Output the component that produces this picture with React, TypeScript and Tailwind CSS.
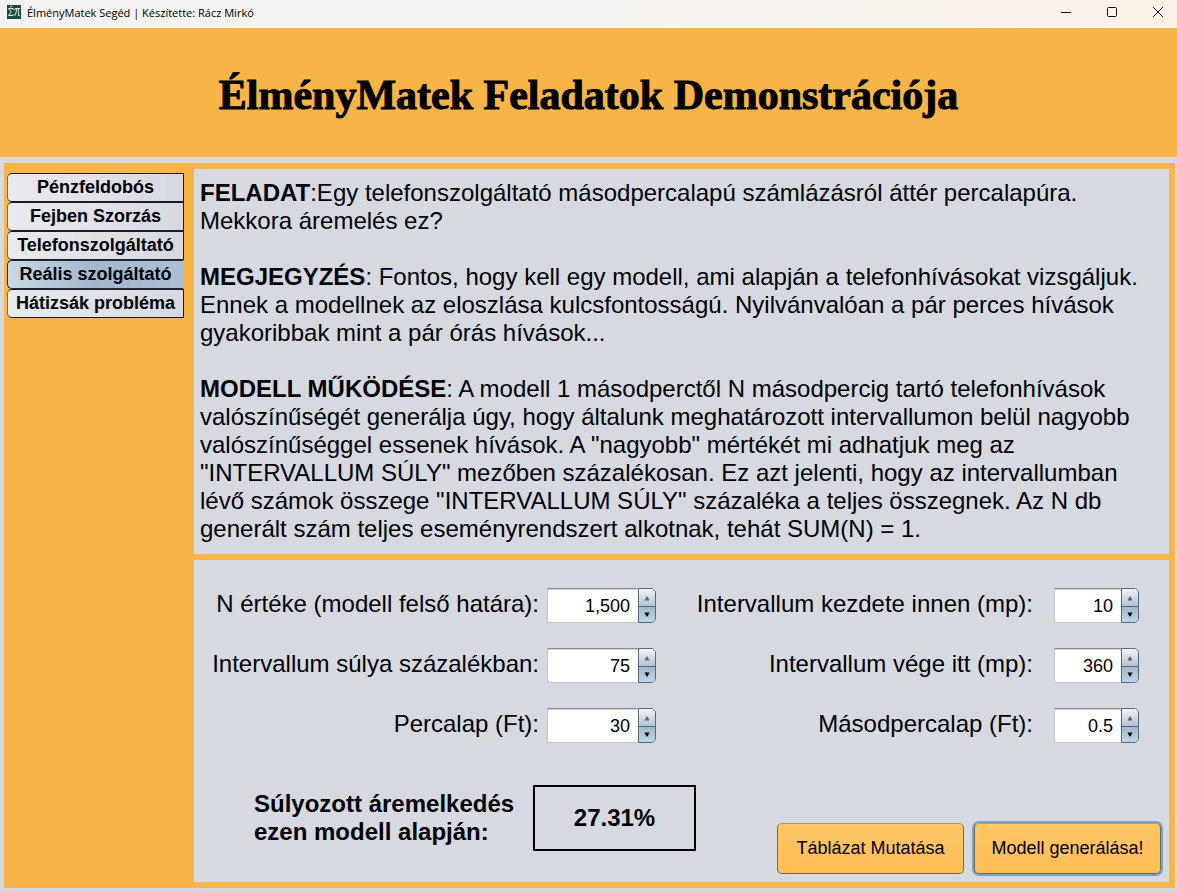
import { useState } from "react";

const tabs = ["Pénzfeldobós", "Fejben Szorzás", "Telefonszolgáltató", "Reális szolgáltató", "Hátizsák probléma"];

const fields = [
  { id: "n", label: "N értéke (modell felső határa):", value: "1,500", right: false },
  { id: "start", label: "Intervallum kezdete innen (mp):", value: "10", right: true },
  { id: "weight", label: "Intervallum súlya százalékban:", value: "75", right: false },
  { id: "end", label: "Intervallum vége itt (mp):", value: "360", right: true },
  { id: "minute", label: "Percalap (Ft):", value: "30", right: false },
  { id: "second", label: "Másodpercalap (Ft):", value: "0.5", right: true },
];

function Spinner({ id, initial }: { id: string; initial: string }) {
  const [value, setValue] = useState(initial);
  const step = (direction: number) => {
    const current = Number(value.replace(/,/g, ""));
    const size = initial.includes(".") ? 0.1 : 1;
    setValue((Math.round((current + direction * size) * 10) / 10).toLocaleString("en-US"));
  };
  return (
    <div className="flex h-[35px]">
      <input
        id={id}
        type="text"
        value={value}
        onChange={(e) => setValue(e.target.value)}
        className="w-full min-w-0 flex-1 border border-r-0 border-[#c4c6cb] border-t-[#8b8d92] bg-white pr-2 text-right text-[18px] leading-6 text-black shadow-[inset_0_1px_0_#d0d1d4] outline-none"
      />
      <div className="flex w-[18px] flex-col overflow-hidden rounded-r-[5px] border border-[#4f6a85]">
        <button type="button" aria-label="Növelés" onClick={() => step(1)} className="flex flex-1 items-center justify-center border-b border-[#4f6a85] bg-linear-to-b from-[#f2f5f8] to-[#b4c2cf] pt-[2px]">
          <svg width="6" height="5" viewBox="0 0 6 5"><path d="M2.5 0.5 H3.5 L5.5 4.5 H0.5 Z" fill="#62686e" /></svg>
        </button>
        <button type="button" aria-label="Csökkentés" onClick={() => step(-1)} className="flex flex-1 items-center justify-center bg-linear-to-b from-[#a3b8cd] to-[#bdd3e7]">
          <svg width="6" height="5" viewBox="0 0 6 5"><path d="M0.5 0.5 H5.5 L3.5 4.5 H2.5 Z" fill="#000" /></svg>
        </button>
      </div>
    </div>
  );
}

export default function App() {
  const [active, setActive] = useState(3);
  return (
    <div className="flex min-h-screen flex-col bg-[#d6d9e0] font-['Liberation_Sans',Arial,sans-serif] text-black">
      <header className="flex h-7 items-center bg-linear-to-r from-[#f2f2f2] via-[#f5f3f1] to-[#faf1e8] pr-[13px] pb-1 pl-[7px] font-['Open_Sans','Noto_Sans',sans-serif] text-[11px]">
        <svg width="14" height="14" viewBox="0 0 14 14" className="mr-[6px]" aria-hidden="true">
          <rect width="14" height="14" fill="#164f3d" />
          <path d="M6 5V3.5H1.5L4.2 7L1.5 10.5H6V9M3.2 2.2L5 1" fill="none" stroke="#e6eeea" strokeWidth="1" />
          <path d="M7 5Q7.5 3.5 9 3.5H13.2M9.5 3.5Q9.5 8 7.8 10.8M11.5 3.5Q11 8 11.5 10.5H12.8" fill="none" stroke="#e6eeea" strokeWidth="1" />
        </svg>
        <span className="flex-1 pt-[2px] leading-4">ÉlményMatek Segéd | Készítette: Rácz Mirkó</span>
        <div className="flex gap-[34px]">
          <button type="button" aria-label="Kis méret">
            <svg width="12" height="12" viewBox="0 0 12 12"><path d="M1 6.5H11" stroke="#111" /></svg>
          </button>
          <button type="button" aria-label="Teljes méret">
            <svg width="12" height="12" viewBox="0 0 12 12"><rect x="1.5" y="1.5" width="9" height="9" rx="1" fill="none" stroke="#111" /></svg>
          </button>
          <button type="button" aria-label="Bezárás">
            <svg width="12" height="12" viewBox="0 0 12 12"><path d="M1 1L11 11M11 1L1 11" stroke="#111" /></svg>
          </button>
        </div>
      </header>
      <div className="flex h-[129px] items-center justify-center bg-[#f7b547] pt-1">
        <h1 className="font-['Bernard_MT_Condensed','Liberation_Serif',serif] text-[42px] leading-[56px] font-bold whitespace-nowrap [-webkit-text-stroke:1px_black]">
          ÉlményMatek Feladatok Demonstrációja
        </h1>
      </div>
      <main className="mt-[6px] mr-[2px] mb-[3px] ml-1 flex flex-1 bg-[#f7b547] py-[6px] pr-[6px] pl-[3px]">
        <nav className="mt-1 mr-[10px] flex w-[177px] shrink-0 flex-col">
          {tabs.map((tab, i) => (
            <button
              key={tab}
              type="button"
              onClick={() => setActive(i)}
              aria-current={active === i ? "page" : undefined}
              className={
                "h-[29px] rounded-l-[5px] border pb-[2px] whitespace-nowrap text-[18px] leading-6 font-bold " +
                (active === i
                  ? "border-[#1d2833] border-r-[#a9bed4] bg-linear-to-r from-[#c9d8e2] via-[#a3b8cc] to-[#abc0d6]"
                  : "border-[#1b1b2b] border-l-[#6a6a72] bg-linear-to-r from-[#e9eaed] to-[#d6d9e0]")
              }
            >
              {tab}
            </button>
          ))}
        </nav>
        <div className="flex min-w-0 flex-1 flex-col gap-[6px]">
          <section className="flex flex-col gap-7 bg-[#d6d9e0] px-[6px] pt-[10px] pb-[11px] text-[24px] leading-7">
            <p>
              <b>FELADAT</b>:Egy telefonszolgáltató másodpercalapú számlázásról áttér percalapúra.<br />
              Mekkora áremelés ez?
            </p>
            <p>
              <b>MEGJEGYZÉS</b>: Fontos, hogy kell egy modell, ami alapján a telefonhívásokat vizsgáljuk.<br />
              Ennek a modellnek az eloszlása kulcsfontosságú. Nyilvánvalóan a pár perces hívások<br />
              gyakoribbak mint a pár órás hívások...
            </p>
            <p>
              <b>MODELL MŰKÖDÉSE</b>: A modell 1 másodperctől N másodpercig tartó telefonhívások<br />
              valószínűségét generálja úgy, hogy általunk meghatározott intervallumon belül nagyobb<br />
              valószínűséggel essenek hívások. A "nagyobb" mértékét mi adhatjuk meg az<br />
              "INTERVALLUM SÚLY" mezőben százalékosan. Ez azt jelenti, hogy az intervallumban<br />
              lévő számok összege "INTERVALLUM SÚLY" százaléka a teljes összegnek. Az N db<br />
              generált szám teljes eseményrendszert alkotnak, tehát SUM(N) = 1.
            </p>
          </section>
          <section className="flex flex-1 flex-col bg-[#d6d9e0] pt-7">
            <div className="grid grid-cols-[353fr_109px_398fr_85px] gap-y-[25px] pr-[30px]">
              {fields.map((f) => (
                <div key={f.id} className="contents">
                  <label
                    htmlFor={f.id}
                    className={"text-right text-[24px] leading-8 whitespace-nowrap " + (f.right ? "pr-[21px]" : "pr-2")}
                  >
                    {f.label}
                  </label>
                  <Spinner id={f.id} initial={f.value} />
                </div>
              ))}
            </div>
            <div className="mt-[42px] flex flex-1 pr-2 pl-[60px] text-[24px] leading-7 font-bold">
              <p className="mt-[5px] w-[279px] shrink-0">
                Súlyozott áremelkedés<br />ezen modell alapján:
              </p>
              <output className="flex h-[66px] w-[163px] items-center justify-center border-2 border-black">27.31%</output>
              <div className="mb-2 ml-auto flex items-end gap-[10px] text-[18px] leading-6 font-normal">
                <button type="button" className="h-[51px] w-[187px] rounded-[5px] border border-[#77684c] border-t-[#a99b80] bg-linear-to-b from-[#ffc666] to-[#ffbe57] pb-[2px]">
                  Táblázat Mutatása
                </button>
                <button type="button" className="h-[51px] w-[187px] rounded-[5px] border border-[#77684c] border-t-[#a99b80] bg-linear-to-b from-[#ffc666] to-[#ffbe57] pb-[2px] ring-2 ring-[#73a4d1]">
                  Modell generálása!
                </button>
              </div>
            </div>
          </section>
        </div>
      </main>
    </div>
  );
}
